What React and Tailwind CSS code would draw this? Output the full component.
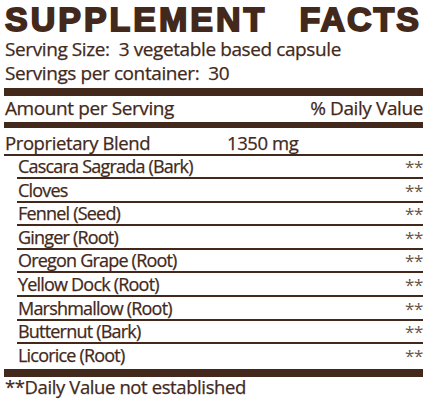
import React from "react";

const ingredients = [
  { name: "Cascara Sagrada (Bark)", h: "h-[23px]" },
  { name: "Cloves", h: "h-[24px]" },
  { name: "Fennel (Seed)", h: "h-[23px]" },
  { name: "Ginger (Root)", h: "h-[24px]" },
  { name: "Oregon Grape (Root)", h: "h-[23px]" },
  { name: "Yellow Dock (Root)", h: "h-[24px]" },
  { name: "Marshmallow (Root)", h: "h-[24px]" },
  { name: "Butternut (Bark)", h: "h-[23px]" },
];

const App = () => {
  return (
    <div className="w-[426px] h-[406px] bg-white text-[#43291b] font-['Open_Sans',sans-serif] tracking-[-0.4px] [-webkit-text-stroke:0.25px_#43291b] overflow-hidden">
      <div className="ml-[4px] w-[419px]">
        {/* Title */}
        <div className="flex justify-between pl-[1px] pr-[2px] pt-[2px] h-[37px] font-['Liberation_Sans',sans-serif] font-black text-[34px] leading-[34px] tracking-[3px] [-webkit-text-stroke:1.8px_#43291b]">
          <span>SUPPLEMENT</span>
          <span className="tracking-[2px]">FACTS</span>
        </div>

        {/* Serving info */}
        <div className="pl-[1px] text-[19px] leading-[24px]">
          <div>Serving Size:&nbsp; 3 vegetable based capsule</div>
          <div>Servings per container:&nbsp; 30</div>
        </div>

        <div className="mt-[3px] h-[8px] bg-[#43291b]" />

        <div className="flex justify-between pl-[1px] text-[19px] leading-[24px]">
          <span>Amount per Serving</span>
          <span>% Daily Value</span>
        </div>

        <div className="mt-[2px] h-[6px] bg-[#43291b]" />

        {/* Proprietary blend */}
        <div className="flex items-end h-[28px] pl-[1px] pb-[2px] border-b-2 border-[#43291b] text-[18.5px] leading-none">
          <span className="w-[222px]">Proprietary Blend</span>
          <span>1350 mg</span>
        </div>

        {/* Ingredients */}
        <div className="ml-[13px]">
          {ingredients.map((item) => (
            <div
              key={item.name}
              className={`flex items-end justify-between ${item.h} pl-[1px] pb-[2px] border-b-2 border-[#43291b] text-[18px] leading-none`}
            >
              <span className="tracking-[-0.8px]">{item.name}</span>
              <span className="text-[17px] text-[#6b5647] [-webkit-text-stroke:0px]">**</span>
            </div>
          ))}
          <div className="flex items-end justify-between h-[25px] pl-[1px] pb-[5px] text-[18px] leading-none">
            <span className="tracking-[-0.8px]">Licorice (Root)</span>
            <span className="text-[17px] text-[#6b5647] [-webkit-text-stroke:0px]">**</span>
          </div>
        </div>

        <div className="h-[8px] bg-[#43291b]" />

        <div className="pl-[1px] pt-[1px] text-[18.5px] leading-none">**Daily Value not established</div>
      </div>
    </div>
  );
};

export default App;
